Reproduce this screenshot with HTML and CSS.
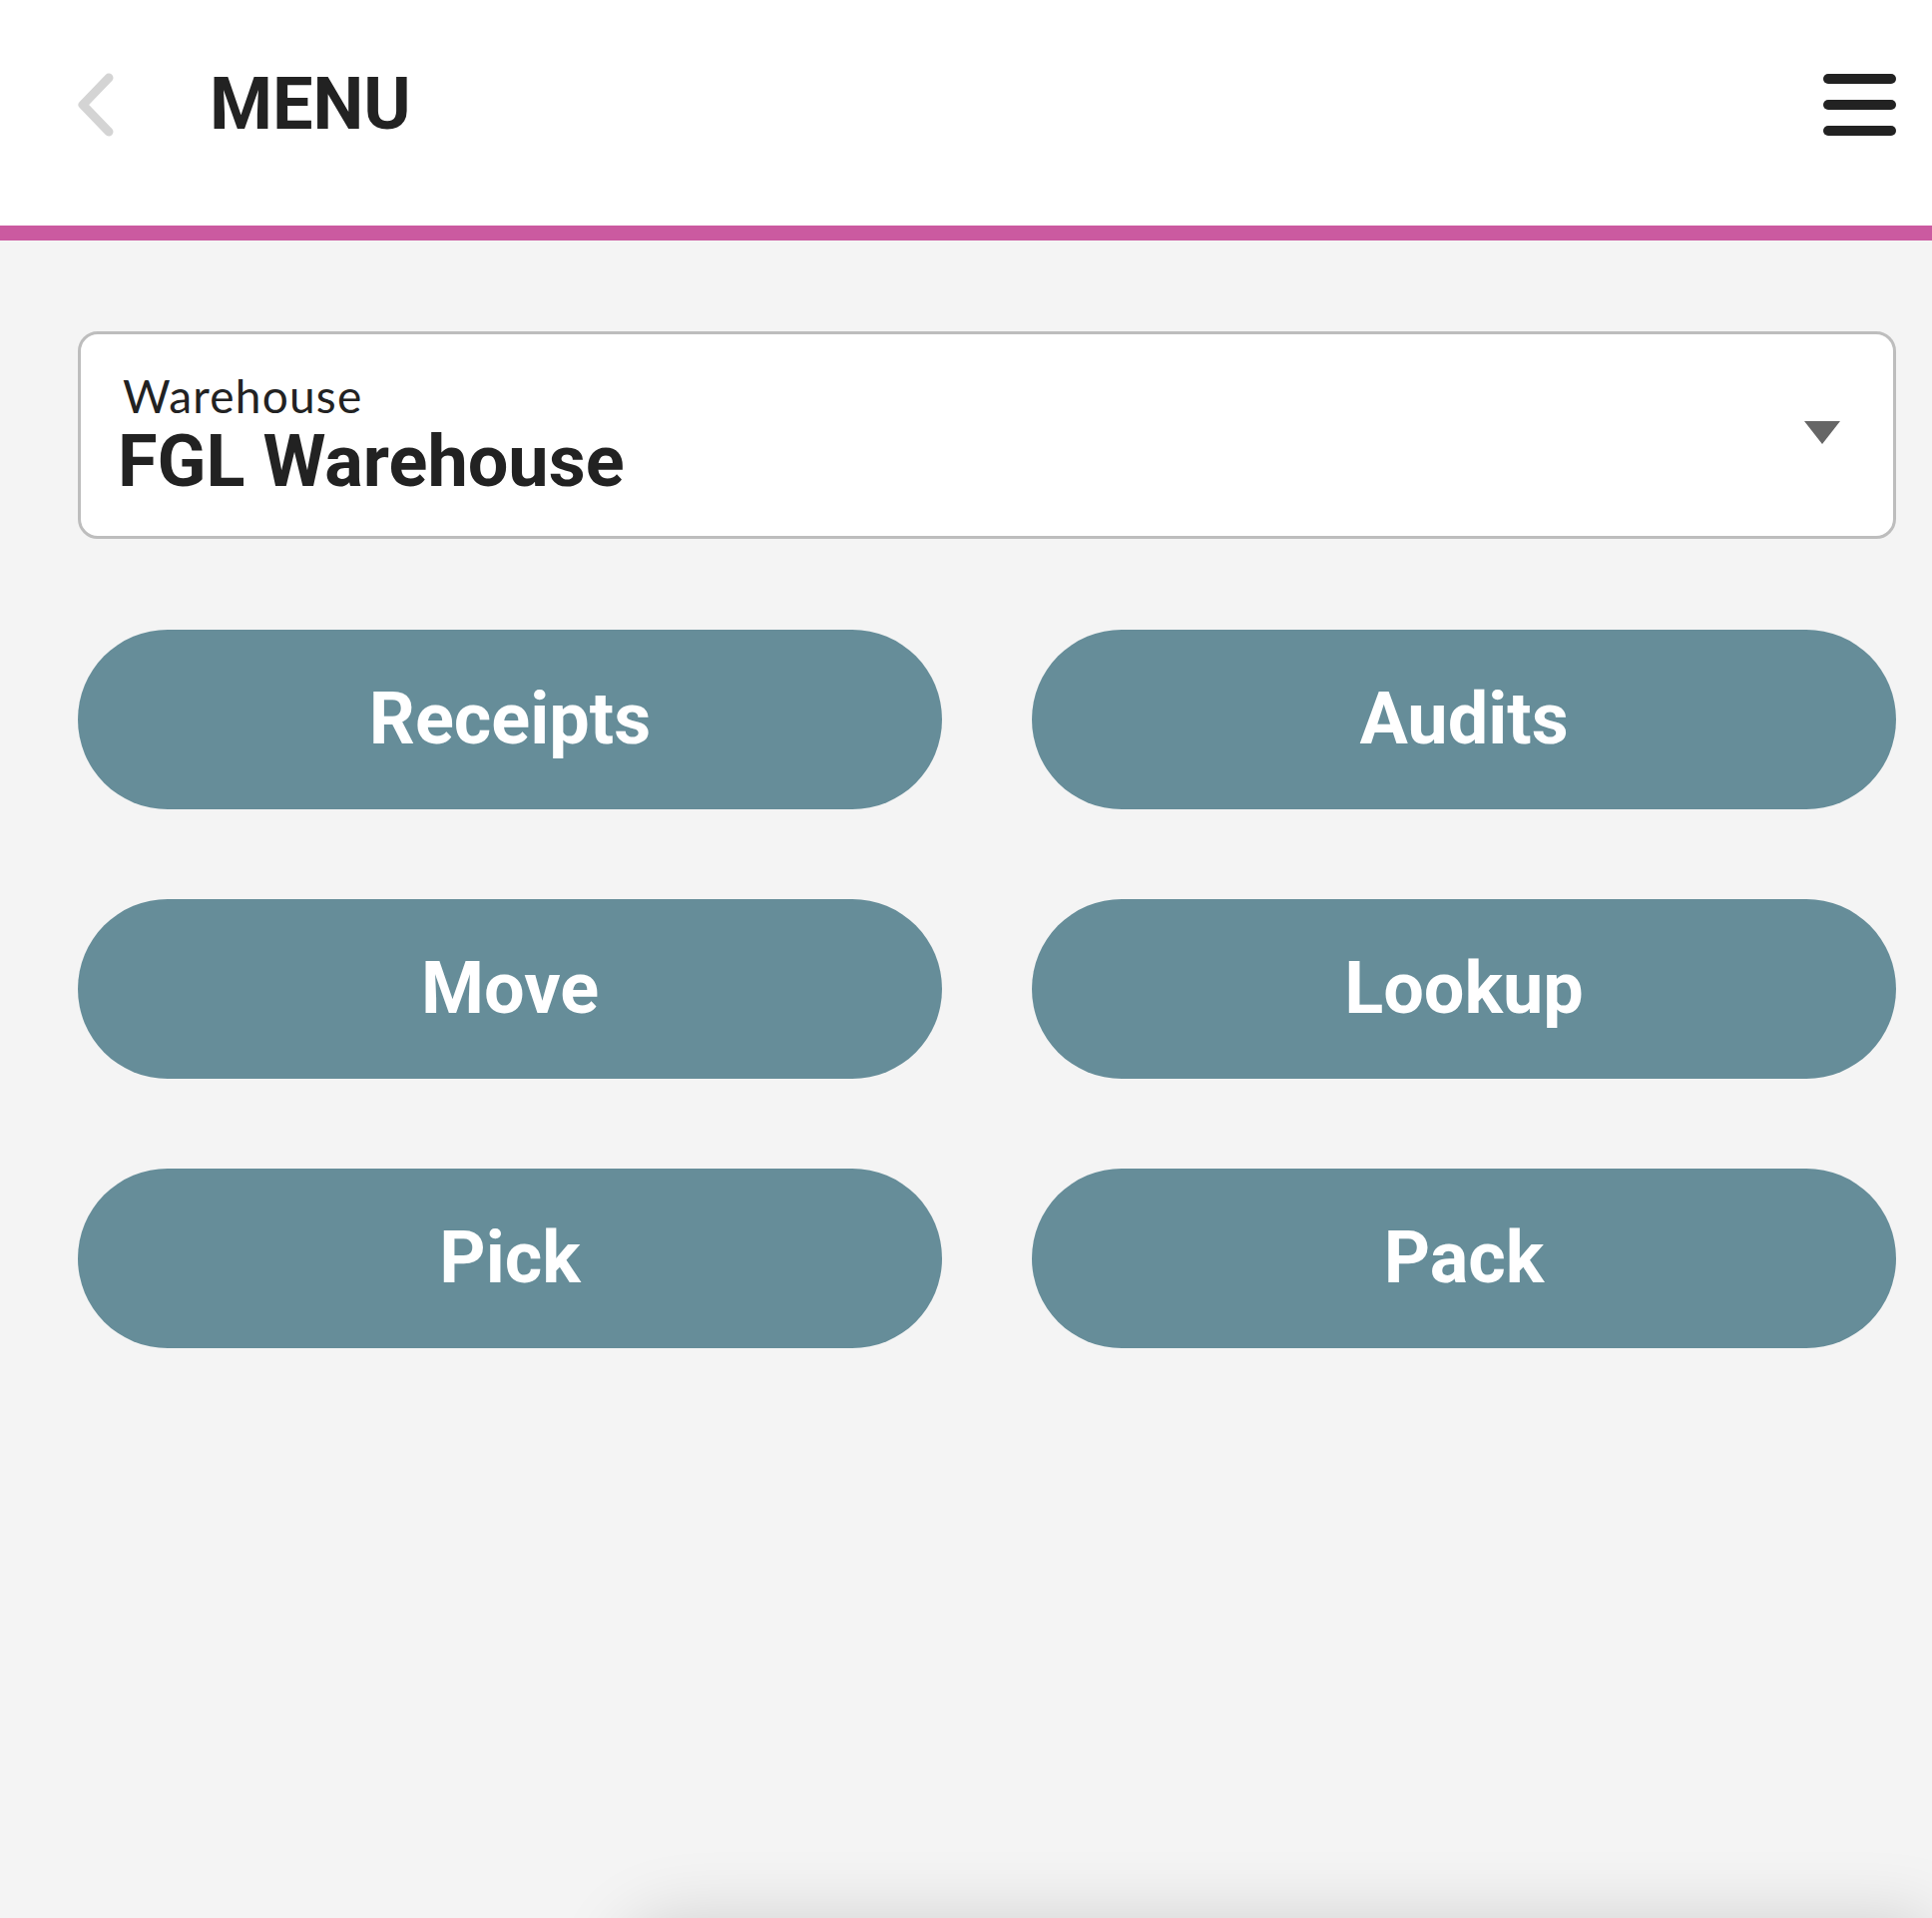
FILE: index.html
```html
<!DOCTYPE html>
<html lang="en">
<head>
  <meta charset="UTF-8" />
  <meta name="viewport" content="width=device-width, initial-scale=1" />
  <title>Menu</title>
  <link rel="stylesheet" href="styles.css">
</head>
<body>
  <!-- Top bar -->
  <header class="topbar">
    <button class="back-btn" aria-label="Back">
      <svg width="36" height="64" viewBox="0 0 36 64">
        <path d="M31 5 L5 32 L31 59" fill="none" stroke="#d4d4d4" stroke-width="9" stroke-linecap="round" stroke-linejoin="round"/>
      </svg>
    </button>
    <h1 class="title">MENU</h1>
    <button class="burger" aria-label="Open menu">
      <span></span><span></span><span></span>
    </button>
  </header>

  <main class="content">
    <!-- Warehouse picker -->
    <div class="picker">
      <div class="picker-text">
        <div class="picker-label">Warehouse</div>
        <div class="picker-value">FGL Warehouse</div>
      </div>
      <span class="caret"></span>
    </div>

    <div class="actions">
      <button class="action">Receipts</button>
      <button class="action">Audits</button>
      <button class="action">Move</button>
      <button class="action">Lookup</button>
      <button class="action">Pick</button>
      <button class="action">Pack</button>
    </div>
  </main>

  <!-- bottom sheet peeking from below -->
  <div class="sheet"></div>
</body>
</html>
```

FILE: styles.css
```css
body {
  margin: 0;
  min-height: 100vh;
  background: #f4f4f4;
  font-family: Roboto, 'Liberation Sans', sans-serif;
  color: #222;
  overflow: hidden;
}

/* --- Top bar --- */
.topbar {
  height: 210px;
  padding: 0 36px 16px 78px;
  background: #fff;
  border-bottom: 15px solid #cb5aa0;
  display: flex;
  align-items: center;
}
.back-btn {
  background: none;
  border: none;
  padding: 0;
  width: 36px; height: 64px;
  cursor: pointer;
}
.back-btn svg { display: block; }
.title {
  margin: 0 0 0 96px;
  font-size: 72px;
  line-height: 1;
  font-weight: 700;
  flex: 1;
}
.burger {
  background: none;
  border: none;
  padding: 0;
  width: 73px;
  display: flex; flex-direction: column;
  gap: 16px;
  cursor: pointer;
}
.burger span {
  display: block;
  height: 10px;
  border-radius: 5px;
  background: #222;
}

/* --- Content --- */
.content {
  padding: 91px 36px 0 78px;
}
.picker {
  background: #fff;
  border: 3px solid #bdbdbd;
  border-radius: 20px;
  padding: 35px 53px 38px 37px;
  display: flex;
  align-items: center;
}
.picker-text { flex: 1; }
.picker-label {
  margin-left: 5px;
  font-family: Lato, 'Noto Sans', sans-serif;
  font-size: 46px;
  line-height: 54px;
  letter-spacing: 1.2px;
  color: #222;
}
.picker-value {
  margin-top: 3px;
  font-size: 72px;
  line-height: 1;
  font-weight: 700;
}
.caret {
  width: 0; height: 0;
  border-left: 18px solid transparent;
  border-right: 18px solid transparent;
  border-top: 23px solid #666;
  margin-bottom: 2px;
}

.actions {
  margin-top: 91px;
  display: grid;
  grid-template-columns: repeat(2, 1fr);
  gap: 90px;
}
.action {
  height: 180px;
  border: none;
  border-radius: 90px;
  background: #668d99;
  color: #fff;
  font-family: Roboto, 'Liberation Sans', sans-serif;
  font-size: 72px;
  font-weight: 700;
  line-height: 1;
  cursor: pointer;
}

.sheet {
  position: fixed;
  left: 620px; right: 0;
  bottom: -200px;
  height: 200px;
  background: #fff;
  border-radius: 60px 0 0 0;
  box-shadow: 0 0 70px rgba(0,0,0,0.15);
}
```
